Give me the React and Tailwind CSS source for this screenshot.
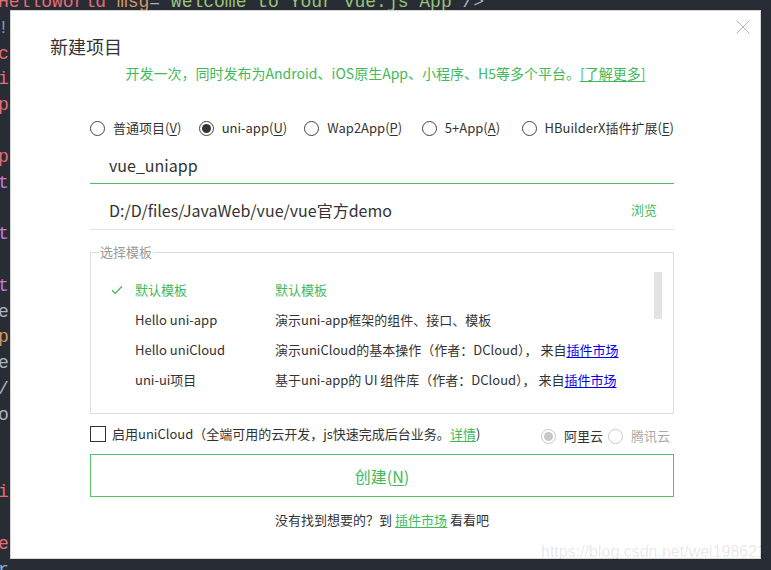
import React from "react"

// editor lines peeking out behind the dialog
const codeLines = [
  [["HelloWorld", "text-[#e06c75]"], [" msg", "text-[#d19a66]"], ["=", "text-[#abb2bf]"], ['"Welcome to Your Vue.js App"', "text-[#98c379]"], ["/>", "text-[#abb2bf]"]],
  [["!", "text-[#8b95a7]"]],
  [["c", "text-[#e06c75]"]],
  [["i", "text-[#e06c75]"]],
  [["p", "text-[#e06c75]"]],
  [],
  [["p", "text-[#e06c75]"]],
  [["t", "text-[#c678dd]"]],
  [[" (", "text-[#61afef]"]],
  [["t", "text-[#c678dd]"]],
  [],
  [["t", "text-[#c678dd]"]],
  [["e", "text-[#abb2bf]"]],
  [["p", "text-[#d19a66]"]],
  [["e", "text-[#abb2bf]"]],
  [["/", "text-[#abb2bf]"]],
  [["o", "text-[#abb2bf]"]],
  [],
  [],
  [["i", "text-[#e06c75]"]],
  [],
  [["e", "text-[#e06c75]"]],
  [["r", "text-[#8fb0d0]"]],
]

const radios = [
  { label: "普通项目(", key: "V", w: "w-[110px]" },
  { label: "uni-app(", key: "U", w: "w-[107px]", checked: true },
  { label: "Wap2App(", key: "P", w: "w-[119px]" },
  { label: "5+App(", key: "A", w: "w-[101px]" },
  { label: "HBuilderX插件扩展(", key: "E", w: "" },
]

function Radio({ checked, disabled }) {
  return (
    <span
      className={`flex h-[15px] w-[15px] shrink-0 items-center justify-center rounded-full border ${
        disabled ? "border-[#c8c8c8]" : "border-[#444]"
      }`}
    >
      {checked && (
        <span className={`h-[9px] w-[9px] rounded-full ${disabled ? "bg-[#c8c8c8]" : "bg-[#333]"}`} />
      )}
    </span>
  )
}

function Market({ className = "text-[#0000ee]" }) {
  return <span className={`underline underline-offset-2 ${className}`}>插件市场</span>
}

export default function App() {
  return (
    <div className="relative h-[570px] w-[771px] overflow-hidden bg-[#282c34]">
      <pre className="-ml-[2px] -mt-[10px] font-['Liberation_Mono',monospace] text-[18px] leading-[25.8px]">
        {codeLines.map((line, i) => (
          <div key={i} className="h-[25.8px] whitespace-pre">
            {line.map(([t, c], j) => (
              <span key={j} className={c}>
                {t}
              </span>
            ))}
          </div>
        ))}
      </pre>

      {/* New project dialog */}
      <div className="absolute left-[10px] top-[10px] h-[549px] w-[751px] bg-white text-[#333] shadow-[inset_0_0_0_1px_#d6d6d6] font-['Noto_Sans_CJK_SC',sans-serif]">
        <div className="relative flex h-full flex-col">
          <button className="absolute right-[11px] top-[10px]">
            <svg width="14" height="14" viewBox="0 0 14 14" fill="none" stroke="#b4b4b4" strokeWidth="1">
              <path d="M0.5 0.5 L13.5 13.5 M13.5 0.5 L0.5 13.5" />
            </svg>
          </button>

          <h1 className="pl-[40px] pt-[25px] text-[18px] font-normal leading-[22px]">新建项目</h1>
          <p className="mt-[6px] text-center text-[14px] leading-[20px] text-[#43b95c]">
            开发一次，同时发布为Android、iOS原生App、小程序、H5等多个平台。
            <span className="underline underline-offset-2">[了解更多]</span>
          </p>

          <div className="ml-[80px] w-[584px]">
            {/* project type */}
            <div className="mt-[35px] flex h-[20px] items-center text-[13px] leading-[20px]">
              {radios.map((r) => (
                <div key={r.key} className={`flex items-center gap-[8px] ${r.w}`}>
                  <Radio checked={r.checked} />
                  <span className="whitespace-nowrap">
                    {r.label}
                    <span className="underline underline-offset-2">{r.key}</span>)
                  </span>
                </div>
              ))}
            </div>

            <div className="mt-[7px] flex h-[39px] items-center border-b border-[#4cc05e] pl-[19px] pt-[1px] text-[16px] leading-[22px]">
              vue_uniapp
            </div>

            <div className="flex h-[46px] items-center justify-between border-b border-[#e2e2e2] pl-[19px] pr-[17px] pt-[6px]">
              <span className="text-[16px] leading-[22px]">D:/D/files/JavaWeb/vue/vue官方demo</span>
              <span className="text-[13px] leading-[20px] text-[#43b95c]">浏览</span>
            </div>

            {/* template picker */}
            <div className="mt-[22px] flex h-[162px] flex-col border border-[#dcdcdc]">
              <span className="-mt-[9px] ml-[8px] w-fit bg-white px-[1px] text-[13px] leading-[16px] text-[#9a9a9a]">
                选择模板
              </span>
              <div className="flex">
                <div className="flex-1 pt-[15px] text-[13px] leading-[30px]">
                  <div className="flex h-[30px] items-center text-[#43b95c]">
                    <span className="flex w-[44px] pl-[20px]">
                      <svg width="12" height="10" viewBox="0 0 12 10" fill="none" stroke="#43b95c" strokeWidth="1.3">
                        <path d="M1 5.2 L4.3 8.4 L11 1.2" />
                      </svg>
                    </span>
                    <span className="w-[140px]">默认模板</span>
                    <span>默认模板</span>
                  </div>
                  <div className="flex h-[30px] items-center">
                    <span className="w-[44px]" />
                    <span className="w-[140px]">Hello uni-app</span>
                    <span>演示uni-app框架的组件、接口、模板</span>
                  </div>
                  <div className="flex h-[30px] items-center">
                    <span className="w-[44px]" />
                    <span className="w-[140px]">Hello uniCloud</span>
                    <span>
                      演示uniCloud的基本操作（作者：DCloud），&nbsp;来自<Market />
                    </span>
                  </div>
                  <div className="flex h-[30px] items-center">
                    <span className="w-[44px]" />
                    <span className="w-[140px]">uni-ui项目</span>
                    <span>
                      基于uni-app的 UI 组件库（作者：DCloud），&nbsp;来自<Market />
                    </span>
                  </div>
                </div>
                <div className="mr-[11px] mt-[12px] h-[47px] w-[8px] bg-[#e3e3e3]" />
              </div>
            </div>

            {/* uniCloud */}
            <div className="mt-[10px] flex h-[20px] items-start justify-between text-[13px] leading-[20px]">
              <div className="flex items-center">
                <span className="h-[16px] w-[16px] border border-[#333]" />
                <span className="ml-[6px]">
                  启用uniCloud（全端可用的云开发，js快速完成后台业务。
                  <span className="text-[#43b95c] underline underline-offset-2">详情</span>)
                </span>
              </div>
              <div className="flex items-center pr-[4px] pt-[2px]">
                <Radio checked disabled />
                <span className="ml-[8px] mr-[5px]">阿里云</span>
                <Radio disabled />
                <span className="ml-[8px] text-[#aaa]">腾讯云</span>
              </div>
            </div>

            <button className="mt-[10px] flex h-[43px] w-full items-center justify-center border border-[#57c267] text-[16px] leading-[22px] text-[#43b95c]">
              创建(<span className="underline underline-offset-2">N</span>)
            </button>

            <p className="mt-[13px] text-center text-[13px] leading-[20px]">
              没有找到想要的？到 <Market className="text-[#43b95c]" /> 看看吧
            </p>
          </div>
        </div>
      </div>

      <span className="absolute left-[541px] top-[542px] whitespace-nowrap font-['Liberation_Sans',sans-serif] text-[16px] leading-[20px] text-[rgba(0,0,0,0.11)]">
        https://blog.csdn.net/wei198621
      </span>
    </div>
  )
}
